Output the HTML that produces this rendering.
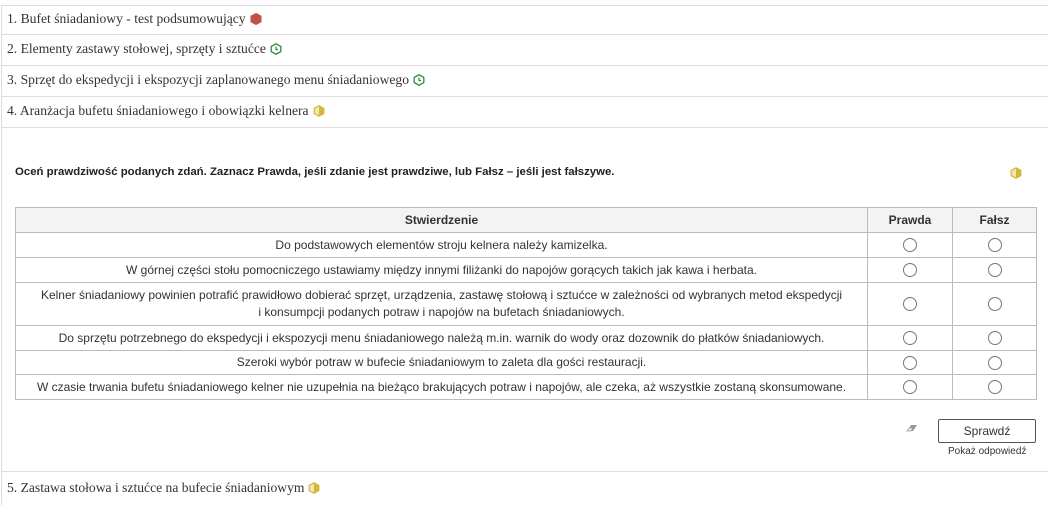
<!DOCTYPE html>
<html><head><meta charset="utf-8"><style>
body{margin:0;width:1048px;height:505px;background:#fff;position:relative;overflow:hidden;font-family:"Liberation Sans",sans-serif;color:#333}
.vl{position:absolute;left:1px;top:5px;width:1px;height:500px;background:#ddd}
.hl{position:absolute;left:1px;right:0;height:1px;background:#ddd}
.row{position:absolute;left:7px;font-family:"Liberation Serif",serif;font-size:13.6px;color:#3a3030;line-height:16px}
.row svg{vertical-align:-2px;margin-left:4px}
.q{position:absolute;left:15px;top:166px;font-size:11.4px;font-weight:bold;color:#222}
table{position:absolute;left:15px;top:207px;border-collapse:collapse;width:1022px;font-size:12px;color:#333}
td,th{border:1px solid #bbb;text-align:center;padding:0 6px}
th{background:#f3f3f3;height:24px;font-weight:bold;color:#333}
td{height:23px;line-height:17px}
.r{display:inline-block;width:12px;height:12px;border:1px solid #777;border-radius:50%;vertical-align:middle}
.btn{position:absolute;left:938px;top:419px;width:96px;height:22px;border:1px solid #555;border-radius:2px;font-size:12px;text-align:center;line-height:22px;color:#333}
.pk{position:absolute;left:948px;top:446px;font-size:10px;color:#333}
</style></head><body>
<div class="vl"></div>
<div class="hl" style="top:5px"></div>
<div class="hl" style="top:34px"></div>
<div class="hl" style="top:65px"></div>
<div class="hl" style="top:96px"></div>
<div class="hl" style="top:127px"></div>
<div class="hl" style="top:471px"></div>
<div class="row" style="top:11px">1. Bufet śniadaniowy - test podsumowujący<svg width="12" height="12" viewBox="0 0 12 12"><polygon points="6,0.5 11,3.2 11,8.8 6,11.5 1,8.8 1,3.2" fill="#c0504d" stroke="#c94a40"/></svg></div>
<div class="row" style="top:41px">2. Elementy zastawy stołowej, sprzęty i sztućce<svg width="12" height="12" viewBox="0 0 12 12"><polygon points="6,0.8 10.8,3.4 10.8,8.6 6,11.2 1.2,8.6 1.2,3.4" fill="none" stroke="#2e8b3a" stroke-width="1.3"/><path d="M6 3.5V6.5H8" fill="none" stroke="#2e8b3a" stroke-width="1.2"/></svg></div>
<div class="row" style="top:72px">3. Sprzęt do ekspedycji i ekspozycji zaplanowanego menu śniadaniowego<svg width="12" height="12" viewBox="0 0 12 12"><polygon points="6,0.8 10.8,3.4 10.8,8.6 6,11.2 1.2,8.6 1.2,3.4" fill="none" stroke="#2e8b3a" stroke-width="1.3"/><path d="M6 3.5V6.5H8" fill="none" stroke="#2e8b3a" stroke-width="1.2"/></svg></div>
<div class="row" style="top:103px">4. Aranżacja bufetu śniadaniowego i obowiązki kelnera<svg width="12" height="12" viewBox="0 0 12 12"><polygon points="6,0.8 10.8,3.4 10.8,8.6 6,11.2 1.2,8.6 1.2,3.4" fill="#f3e7b0" stroke="#d4b73a" stroke-width="1.2"/><path d="M6 0.8L10.8 3.4V8.6L6 11.2Z" fill="#d4b73a"/></svg></div>
<div class="q">Oceń prawdziwość podanych zdań. Zaznacz Prawda, jeśli zdanie jest prawdziwe, lub Fałsz – jeśli jest fałszywe.</div>
<svg style="position:absolute;left:1010px;top:167px" width="12" height="12" viewBox="0 0 12 12"><polygon points="6,0.8 10.8,3.4 10.8,8.6 6,11.2 1.2,8.6 1.2,3.4" fill="#f3e7b0" stroke="#d4b73a" stroke-width="1.2"/><path d="M6 0.8L10.8 3.4V8.6L6 11.2Z" fill="#d4b73a"/></svg>
<table>
<tr><th>Stwierdzenie</th><th style="width:72px">Prawda</th><th style="width:71px">Fałsz</th></tr>
<tr><td style="height:24px">Do podstawowych elementów stroju kelnera należy kamizelka.</td><td><span class="r"></span></td><td><span class="r"></span></td></tr>
<tr><td style="height:24px">W górnej części stołu pomocniczego ustawiamy między innymi filiżanki do napojów gorących takich jak kawa i herbata.</td><td><span class="r"></span></td><td><span class="r"></span></td></tr>
<tr><td style="height:42px">Kelner śniadaniowy powinien potrafić prawidłowo dobierać sprzęt, urządzenia, zastawę stołową i sztućce w zależności od wybranych metod ekspedycji<br>i konsumpcji podanych potraw i napojów na bufetach śniadaniowych.</td><td><span class="r"></span></td><td><span class="r"></span></td></tr>
<tr><td style="height:24px">Do sprzętu potrzebnego do ekspedycji i ekspozycji menu śniadaniowego należą m.in. warnik do wody oraz dozownik do płatków śniadaniowych.</td><td><span class="r"></span></td><td><span class="r"></span></td></tr>
<tr><td style="height:23px">Szeroki wybór potraw w bufecie śniadaniowym to zaleta dla gości restauracji.</td><td><span class="r"></span></td><td><span class="r"></span></td></tr>
<tr><td style="height:24px">W czasie trwania bufetu śniadaniowego kelner nie uzupełnia na bieżąco brakujących potraw i napojów, ale czeka, aż wszystkie zostaną skonsumowane.</td><td><span class="r"></span></td><td><span class="r"></span></td></tr>
</table>
<svg style="position:absolute;left:905px;top:423px" width="14" height="12" viewBox="0 0 14 12"><path d="M6 2H12L8 8H2Z" fill="#999"/><path d="M2 8L4.5 5H8L6 8Z" fill="#f2f2f2" stroke="#999" stroke-width="0.8"/></svg>
<div class="btn">Sprawdź</div>
<div class="pk">Pokaż odpowiedź</div>
<div class="row" style="top:480px">5. Zastawa stołowa i sztućce na bufecie śniadaniowym<svg width="12" height="12" viewBox="0 0 12 12"><polygon points="6,0.8 10.8,3.4 10.8,8.6 6,11.2 1.2,8.6 1.2,3.4" fill="#f3e7b0" stroke="#d4b73a" stroke-width="1.2"/><path d="M6 0.8L10.8 3.4V8.6L6 11.2Z" fill="#d4b73a"/></svg></div>
</body></html>
